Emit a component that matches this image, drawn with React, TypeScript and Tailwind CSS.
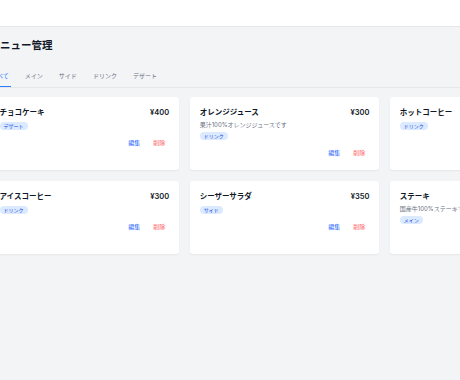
import React, { useState } from 'react';

type Item = { name: string; price: number; desc?: string; category: string };

const items: Item[] = [
  { name: 'チョコケーキ', price: 400, category: 'デザート' },
  { name: 'オレンジジュース', price: 300, desc: '果汁100%オレンジジュースです', category: 'ドリンク' },
  { name: 'ホットコーヒー', price: 300, category: 'ドリンク' },
  { name: 'アイスコーヒー', price: 300, category: 'ドリンク' },
  { name: 'シーザーサラダ', price: 350, category: 'サイド' },
  { name: 'ステーキ', price: 1800, desc: '国産牛100%ステーキです', category: 'メイン' },
];

const tabs = ['すべて', 'メイン', 'サイド', 'ドリンク', 'デザート'];

function MenuCard({ item }: { item: Item }) {
  return (
    <div className="flex flex-col rounded-[3px] bg-white px-[10px] pt-[10.5px] pb-[12px] shadow-[0_1px_2px_rgba(0,0,0,0.06)]">
      <div className="flex items-start justify-between">
        <h3 className="text-[7.5px] leading-[12px] font-semibold text-gray-900">{item.name}</h3>
        <span className="text-[7.5px] leading-[12px] font-semibold text-gray-900">¥{item.price.toLocaleString()}</span>
      </div>
      {item.desc && <p className="mt-[1px] text-[6px] leading-[9px] text-gray-500">{item.desc}</p>}
      <span className="mt-[3px] w-fit rounded-full bg-blue-100 px-[4px] py-[1px] text-[5px] leading-[6px] text-blue-700">
        {item.category}
      </span>
      <div className="mt-[7px] flex justify-end gap-[5px]">
        <button className="px-[4px] py-[1px] text-[6px] leading-[9px] text-blue-600">編集</button>
        <button className="px-[4px] py-[1px] text-[6px] leading-[9px] text-red-400">削除</button>
      </div>
    </div>
  );
}

export default function App() {
  const [active, setActive] = useState('すべて');

  return (
    <div
      className="h-[380px] w-[460px] overflow-hidden bg-gray-100"
      style={{ fontFamily: '"Inter", "Noto Sans CJK JP", sans-serif' }}
    >
      <header className="h-[27px] border-b border-gray-200 bg-white" />
      <main className="ml-[-10.5px] w-[590px] pt-[12px]">
        <h1 className="text-[10.5px] leading-[14px] font-bold text-gray-900">メニュー管理</h1>
        <nav className="mt-[10.5px] flex gap-[12px] border-b border-gray-200">
          {tabs.map((t) => (
            <button
              key={t}
              onClick={() => setActive(t)}
              className={
                t === active
                  ? 'border-b-[1.5px] border-blue-500 px-[2px] pt-[7px] pb-[6px] text-[6px] leading-[9px] text-blue-500'
                  : 'border-b-[1.5px] border-transparent px-[2px] pt-[7px] pb-[6px] text-[6px] leading-[9px] text-gray-500'
              }
            >
              {t}
            </button>
          ))}
        </nav>
        <div className="mt-[9px] grid grid-cols-3 gap-[10.5px]">
          {items.map((item) => (
            <MenuCard key={item.name} item={item} />
          ))}
        </div>
      </main>
    </div>
  );
}
